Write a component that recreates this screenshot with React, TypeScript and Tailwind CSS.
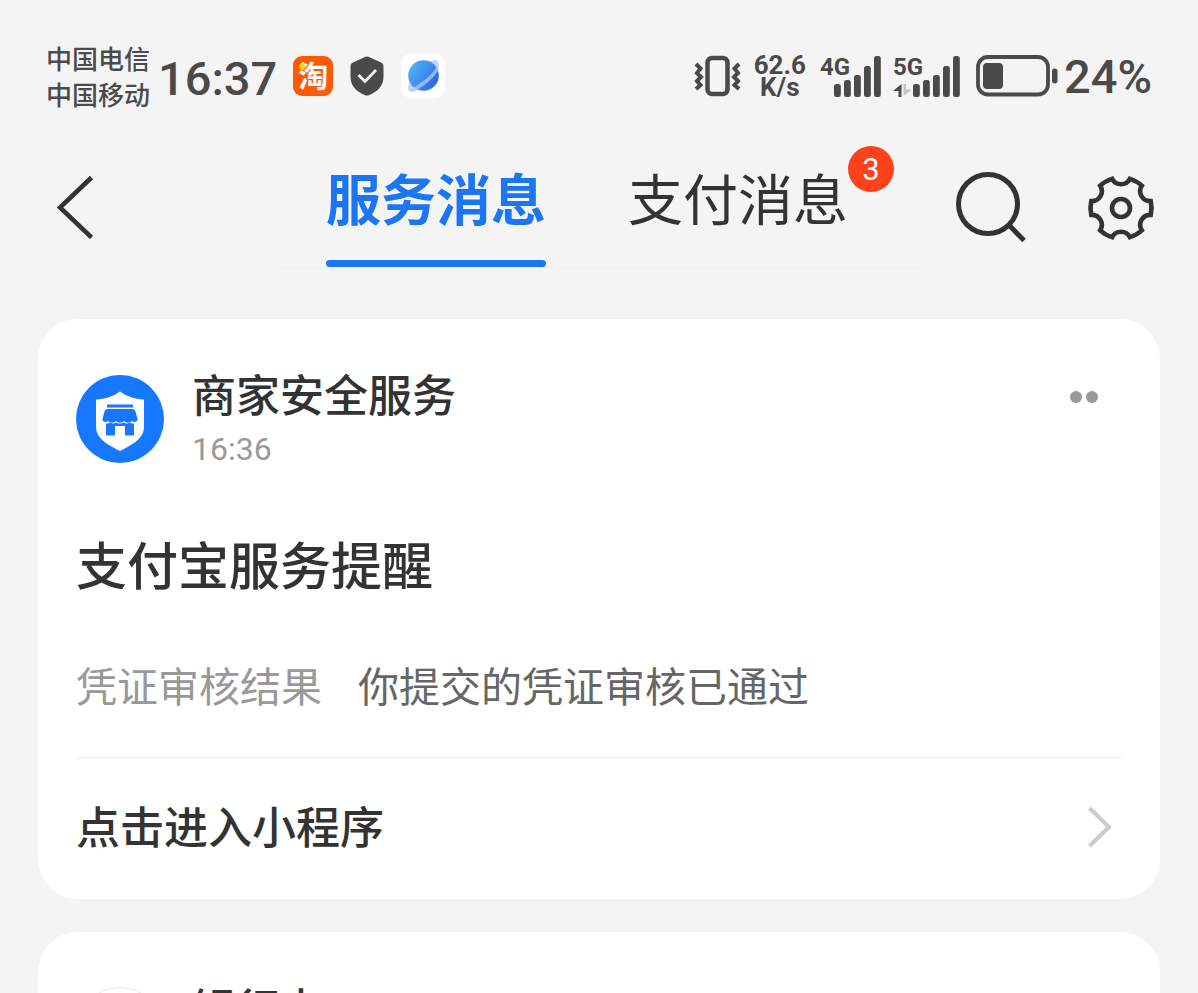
import React from "react";

const cjk = "font-['Noto_Sans_CJK_SC',sans-serif]";
const latin = "font-[Roboto,'Noto_Sans_CJK_SC',sans-serif]";

function TaoIcon() {
  return (
    <span className="relative flex size-10 items-center justify-center rounded-[9px] bg-linear-to-br from-[#fb5a00] to-[#ff5a10] pb-1">
      <span className="text-[30px] leading-none font-bold text-white">淘</span>
      <span className="absolute top-2 left-1.5 size-1.5 rounded-full bg-[#ffd400]" />
    </span>
  );
}

function ShieldCheckIcon() {
  return (
    <svg width="34" height="40" viewBox="0 0 34 40" aria-hidden="true">
      <path
        d="M17 .5c1 0 1.600.3 2.500.8L31 6.500c1.800.9 2.500 2 2.500 4V21c0 8.500-5.500 14.500-14 17.900-1.800.7-3.200.7-5 0C6 35.500.5 29.500.5 21V10.500c0-2 .7-3.100 2.500-4L14.500 1.300c.9-.5 1.500-.8 2.500-.8Z"
        fill="#4a4a4a"
      />
      <path d="m8.500 19 6.500 6.500L26 14" fill="none" stroke="#f4f4f4" strokeWidth="2.800" />
    </svg>
  );
}

function BrowserIcon() {
  return (
    <svg width="44" height="44" viewBox="0 0 44 44" aria-hidden="true">
      <defs>
        <linearGradient id="globe" x1="0" y1="0.200" x2="1" y2="0.800">
          <stop offset="0" stopColor="#52b4f5" />
          <stop offset="0.500" stopColor="#3f8ff0" />
          <stop offset="1" stopColor="#2a5fdc" />
        </linearGradient>
      </defs>
      <rect width="44" height="44" rx="10" fill="#fff" />
      <ellipse cx="22.500" cy="22" rx="20.500" ry="8" transform="rotate(-46 22.500 22)" fill="#c3d2f8" />
      <circle cx="22.500" cy="21.500" r="15.300" fill="url(#globe)" />
      <path
        d="M7.500 35.500C15 33.500 31 22 36.500 11.500c.8 1.500 1.200 3 1 4.500C32 25 22 33 13.500 37c-3 .9-5.500.5-6-1.500Z"
        fill="#a9cdfb"
        opacity="0.750"
      />
    </svg>
  );
}

function VibrateIcon() {
  return (
    <svg width="48" height="42" viewBox="0 0 48 42" fill="none" stroke="#4a4a4a" aria-hidden="true">
      <rect x="13.500" y="3" width="20" height="36" rx="4.500" strokeWidth="4.500" />
      <path
        d="m2 9 4.500 4.500L3 18l4 4-4 4 3.500 4L2 34M45 9l-4.500 4.500L44 18l-4 4 4 4-3.500 4L45 34"
        strokeWidth="4"
      />
    </svg>
  );
}

function SignalBars({ className }: { className: string }) {
  return (
    <svg width="47" height="42" viewBox="0 0 47 42" className={className} fill="#4a4a4a" aria-hidden="true">
      <rect x="0" y="29" width="6.800" height="13" rx="2.500" />
      <rect x="10" y="25" width="6.800" height="17" rx="2.500" />
      <rect x="20" y="20" width="6.800" height="22" rx="2.500" />
      <rect x="30" y="11" width="6.800" height="31" rx="2.500" />
      <rect x="40" y="1" width="6.800" height="41" rx="2.500" />
    </svg>
  );
}

const networkLabel = "absolute top-0 left-0 font-[Roboto,sans-serif] text-[24px] leading-6 font-bold";

function BatteryIcon() {
  return (
    <svg width="83" height="42" viewBox="0 0 83 42" aria-hidden="true">
      <rect x="3" y="2" width="70" height="37.500" rx="10" fill="none" stroke="#4a4a4a" strokeWidth="3.800" />
      <rect x="8" y="8" width="20" height="26" rx="4" fill="#4a4a4a" />
      <rect x="77" y="13.500" width="5.500" height="15" rx="2.700" fill="#4a4a4a" />
    </svg>
  );
}

function StatusBar() {
  return (
    <div className="flex items-center justify-between pt-10 pr-[46px] pl-[46px] text-[#4a4a4a]">
      <div className="flex items-center">
        <div className="text-[26px] leading-9 font-medium">
          <div>中国电信</div>
          <div>中国移动</div>
        </div>
        <time className={`${latin} ml-2 pt-1 text-[47px] leading-none font-medium`}>16:37</time>
        <div className="ml-4 flex items-center gap-[17px]">
          <TaoIcon />
          <ShieldCheckIcon />
          <BrowserIcon />
        </div>
      </div>
      <div className="flex items-center">
        <VibrateIcon />
        <div className={`${latin} ml-3 text-center text-[26px] leading-[22px] font-bold`}>
          <div>62.6</div>
          <div>K/s</div>
        </div>
        <div className="ml-3.5 flex gap-3">
          <div className="relative pl-3.5">
            <span className={networkLabel}>4G</span>
            <SignalBars className="block" />
          </div>
          <div className="relative pl-5">
            <span className={networkLabel}>5G</span>
            <svg
              width="19"
              height="13"
              viewBox="0 0 19 13"
              className="absolute bottom-0 left-0"
              aria-hidden="true"
            >
              <path d="M8.500 0v13h-3V7H0Z" fill="#4a4a4a" />
              <path d="M10.500 0h2.500v5.500h6L10.500 12Z" fill="#c4c4c4" />
            </svg>
            <SignalBars className="block" />
          </div>
        </div>
        <div className="ml-[15px] flex items-center gap-1.5">
          <BatteryIcon />
          <span className={`${latin} text-[47px] leading-none font-medium`}>24%</span>
        </div>
      </div>
    </div>
  );
}

function gearPath() {
  const point = (degrees: number) => {
    const a = (degrees * Math.PI) / 180;
    return `${(34 + 30.5 * Math.cos(a)).toFixed(2)} ${(34 + 30.5 * Math.sin(a)).toFixed(2)}`;
  };
  let d = `M${point(-73)}`;
  for (let i = 0; i < 6; i++) {
    const start = -73 + i * 60;
    d += `A30.5 30.5 0 0 1 ${point(start + 26)}A10 10 0 0 0 ${point(start + 60)}`;
  }
  return d + "Z";
}

function Header() {
  return (
    <header className="flex items-start pt-[34px] pr-[43px] pl-[54px] text-[#333]">
      <button type="button" aria-label="返回" className="mt-[29px]">
        <svg width="42" height="64" viewBox="0 0 42 64" fill="none" stroke="#333" strokeWidth="4.500" aria-hidden="true">
          <path d="M37.500 2.500 6 32.500l31.500 30" />
        </svg>
      </button>
      <div role="tablist" className="mr-[33px] ml-auto flex gap-[82px] border-b border-[#efefef] pr-[74px] pl-[51px]">
        <button
          type="button"
          role="tab"
          aria-selected="true"
          className="relative h-[121px] pb-5 text-[55px] leading-none font-bold text-[#1b76f5]"
        >
          服务消息
          <span className="absolute inset-x-0 bottom-0 h-[7px] rounded-full bg-[#1b76f5]" />
        </button>
        <button
          type="button"
          role="tab"
          aria-selected="false"
          className="relative h-[121px] pb-5 text-[55px] leading-none"
        >
          支付消息
          <span className="absolute top-0 left-full flex size-[46px] items-center justify-center rounded-full bg-[#ff411c] font-[Roboto,sans-serif] text-[31px] leading-none text-white">
            3
          </span>
        </button>
      </div>
      <div className="mt-[26px] flex items-center gap-[60px]">
        <button type="button" aria-label="搜索">
          <svg width="72" height="72" viewBox="0 0 72 72" fill="none" stroke="#333" strokeWidth="5" aria-hidden="true">
            <circle cx="33" cy="32" r="29.500" />
            <path d="m53 52 16 16.500" />
          </svg>
        </button>
        <button type="button" aria-label="设置">
          <svg width="68" height="68" viewBox="0 0 68 68" fill="none" stroke="#333" strokeWidth="4.600" aria-hidden="true">
            <path d={gearPath()} />
            <circle cx="34" cy="34" r="9" />
          </svg>
        </button>
      </div>
    </header>
  );
}

function ShopAvatar() {
  return (
    <svg width="88" height="88" viewBox="0 0 88 88" aria-hidden="true">
      <circle cx="44" cy="44" r="44" fill="#1677ff" />
      <path
        d="M44 16.500c7 5 14 7.500 24 8v27c0 12-11 18-24 24.500C31 69.500 20 63.500 20 51.500v-27c10-.5 17-3 24-8Z"
        fill="#fff"
      />
      <g fill="#1677ff">
        <path d="M31 29.500h26v3H31z" />
        <path d="M32 34h24c2 0 3 .8 3.500 2.500L61.500 44c.3 3-3 4-5.500 2-2 2.300-6 2.300-8 0-2 2.300-6 2.300-8 0-2 2.300-6 2.300-8 0-2.500 2-5.800 1-5.500-2l2-7.500C29 34.800 30 34 32 34Z" />
        <path d="M30 48.500c2 .3 3-.2 4-1 2.500 1.500 4 1.300 6 0 2 1.300 5 1.300 8 0 2 1.300 4 1.300 6 0 1 .8 2 1.300 4 1V59c0 1-.6 1.500-1.500 1.500H49V51H39v9.500h-7.500c-.9 0-1.500-.5-1.500-1.500Z" />
      </g>
    </svg>
  );
}

function MessageCard() {
  return (
    <article className="rounded-[40px] bg-white px-[38px] pt-[52px] pb-11">
      <div className="flex items-start">
        <div className="pt-1">
          <ShopAvatar />
        </div>
        <div className="ml-7 flex-1">
          <h2 className="text-[44px] leading-[44px] font-medium">商家安全服务</h2>
          <time className={`${latin} mt-4 block text-[32px] leading-9 text-[#999]`}>16:36</time>
        </div>
        <button type="button" aria-label="更多" className="mt-5 mr-6 flex gap-1">
          <span className="size-3 rounded-full bg-[#999]" />
          <span className="size-3 rounded-full bg-[#999]" />
        </button>
      </div>
      <h3 className="mt-16 text-[51px] leading-[64px] font-medium">支付宝服务提醒</h3>
      <dl className="mt-[59px] flex gap-9 text-[41px] leading-[60px]">
        <dt className="text-[#999]">凭证审核结果</dt>
        <dd className="text-[#666]">你提交的凭证审核已通过</dd>
      </dl>
      <a href="#mini-program" className="mt-[43px] flex items-center justify-between border-t border-[#eee] pt-[37px] pr-2">
        <span className="text-[44px] leading-[60px] font-medium">点击进入小程序</span>
        <svg width="28" height="48" viewBox="0 0 28 48" fill="none" stroke="#ccc" strokeWidth="4" aria-hidden="true">
          <path d="m3.500 7 19.500 19-19.500 19" />
        </svg>
      </a>
    </article>
  );
}

function BankCard() {
  return (
    <article className="flex items-start rounded-t-[40px] bg-white px-[38px] pt-[53px] pb-14">
      <div className="pt-0.5">
        <div className="size-[88px] rounded-full border border-[#e8e8e8]" />
      </div>
      <h2 className="ml-7 text-[44px] leading-[44px] font-medium">银行卡</h2>
    </article>
  );
}

export default function App() {
  return (
    <div className={`${cjk} h-screen overflow-hidden bg-[#f4f4f4] text-[#333]`}>
      <StatusBar />
      <Header />
      <main className="mt-[51px] flex flex-col gap-[33px] px-[38px]">
        <MessageCard />
        <BankCard />
      </main>
    </div>
  );
}
